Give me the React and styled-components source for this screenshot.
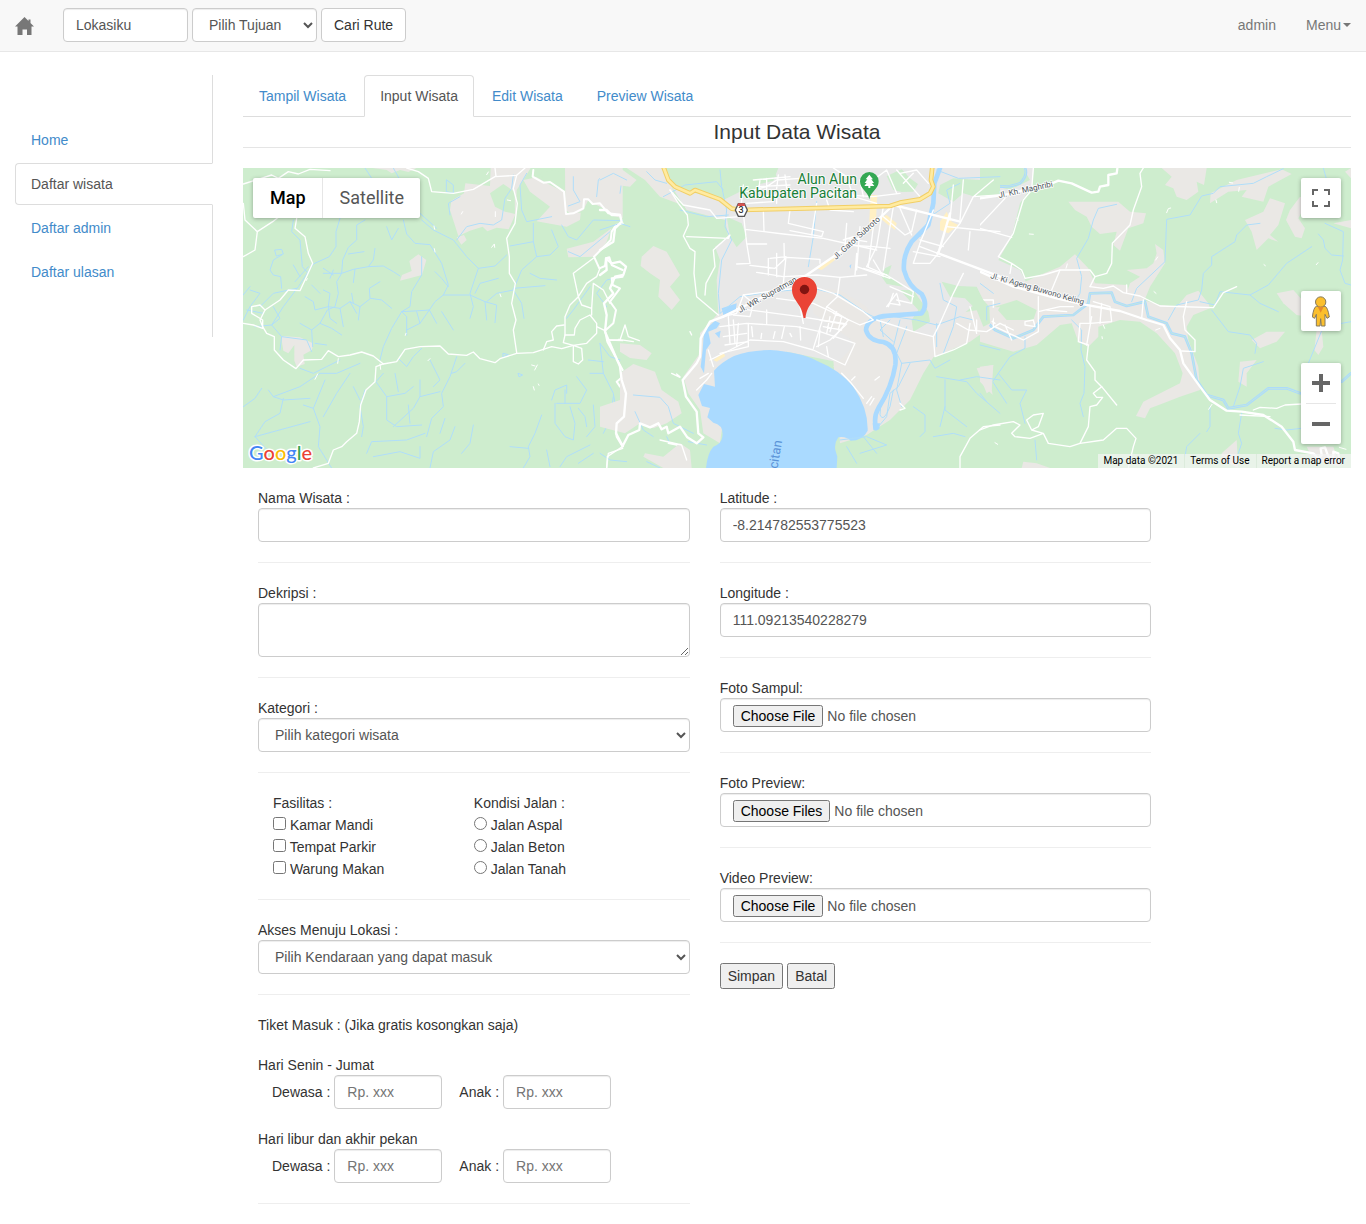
import React, { useState } from "react";
import styled, { createGlobalStyle } from "styled-components";

const GlobalStyle = createGlobalStyle`
  *, *::before, *::after { box-sizing: border-box; }
  body {
    margin: 0;
    background: #fff;
    color: #333;
    font-family: "Liberation Sans", Arial, sans-serif;
    font-size: 14px;
    line-height: 20px;
  }
  input, select, textarea, button { font-family: inherit; font-size: inherit; line-height: inherit; }
  a { color: #428bca; text-decoration: none; }
`;

/* ---------- Navbar ---------- */

const Navbar = styled.header`
  display: flex;
  align-items: flex-start;
  justify-content: space-between;
  min-height: 52px;
  padding: 0 15px;
  background: #f8f8f8;
  border-bottom: 1px solid #e7e7e7;
`;

const NavGroup = styled.div`
  display: flex;
  align-items: flex-start;
  gap: ${(p) => p.$gap}px;
`;

const NavLink = styled.a`
  display: flex;
  align-items: center;
  gap: 2px;
  padding: 15px 0;
  color: #777;
`;

const BrandLink = styled.a`
  display: flex;
  padding: 17px 0 16px;
`;

const RouteForm = styled.form`
  display: flex;
  gap: 4px;
  padding: 8px 0;
`;

const Caret = styled.span`
  border-top: 4px solid #777;
  border-left: 4px solid transparent;
  border-right: 4px solid transparent;
`;

/* ---------- Form controls ---------- */

const controlStyle = `
  display: block;
  height: 34px;
  padding: 6px 12px;
  color: #555;
  background: #fff;
  border: 1px solid #ccc;
  border-radius: 4px;
  box-shadow: inset 0 1px 1px rgba(0, 0, 0, 0.075);
`;

const TextInput = styled.input`
  ${controlStyle}
  width: ${(p) => p.$width || "100%"};
  &::placeholder { color: #757575; }
`;

const Select = styled.select`
  ${controlStyle}
  width: ${(p) => p.$width || "100%"};
`;

const TextArea = styled.textarea`
  ${controlStyle}
  width: 100%;
  height: 54px;
  resize: vertical;
`;

const SearchButton = styled.button`
  height: 34px;
  padding: 6px 12px;
  color: #333;
  background: #fff;
  border: 1px solid #ccc;
  border-radius: 4px;
`;

/* ---------- Page layout ---------- */

const Page = styled.div`
  display: grid;
  grid-template-columns: 198px minmax(0, 1fr);
  gap: 30px;
  align-items: start;
  padding: 23px 15px 0;
`;

const SideNav = styled.nav`
  display: flex;
  flex-direction: column;
  gap: 2px;
  padding: 44px 0;
  border-right: 1px solid #ddd;
`;

const SideLink = styled.a`
  margin-right: -1px;
  padding: 10px 15px;
  border: 1px solid transparent;
  border-radius: 4px 0 0 4px;
  ${(p) => p.$active && `
    color: #555;
    background: #fff;
    border-color: #ddd #fff #ddd #ddd;
  `}
`;

const Tabs = styled.nav`
  display: flex;
  gap: 2px;
  border-bottom: 1px solid #ddd;
`;

const Tab = styled.a`
  margin-bottom: -1px;
  padding: 10px 15px;
  border: 1px solid transparent;
  border-radius: 4px 4px 0 0;
  ${(p) => p.$active && `
    color: #555;
    background: #fff;
    border-color: #ddd #ddd #fff;
  `}
`;

const Title = styled.h1`
  margin: 0 0 20px;
  border-bottom: 1px solid #e5e5e5;
  font-size: 21px;
  line-height: 30px;
  font-weight: 400;
  text-align: center;
`;

const FormGrid = styled.form`
  display: grid;
  grid-template-columns: 5fr 5fr 2fr;
  padding-top: 20px;
`;

const Column = styled.div`
  min-width: 0;
  padding: 0 15px;
`;

const Divider = styled.hr`
  margin: 20px 0;
  border: 0;
  border-top: 1px solid #eee;
`;

const FieldLabel = styled.label`
  display: block;
`;

const OptionGroups = styled.div`
  display: grid;
  grid-template-columns: 1fr 1fr;
  padding: 0 15px;
`;

const OptionGroup = styled.fieldset`
  margin: 0;
  padding: 0;
  border: 0;
  min-width: 0;
  legend { padding: 0; }
`;

const Option = styled.label`
  display: block;
  input { margin: 4px 0 0; }
`;

const TicketHeading = styled.p`
  margin: 0 0 20px;
`;

const TicketGroup = styled.fieldset`
  margin: 0 0 20px;
  padding: 0;
  border: 0;
  legend { padding: 0; }
`;

const TicketRow = styled.div`
  display: flex;
  align-items: center;
  gap: 4px;
  padding-left: 14px;
`;

const TicketLabel = styled.label`
  input + & { margin-left: 13px; }
`;

const Actions = styled.div`
  display: flex;
  gap: 4px;
`;

const ActionButton = styled.button`
  color: #333;
`;

/* ---------- Map ---------- */

const MapFrame = styled.section`
  position: relative;
  height: 300px;
  overflow: hidden;
  background: #ceedce;
  font-family: Roboto, sans-serif;
`;

const MapCanvas = styled.svg`
  display: block;
  width: 100%;
  height: 100%;
`;

const MapOverlay = styled.div`
  position: absolute;
  display: flex;
  flex-direction: ${(p) => (p.$column ? "column" : "row")};
  top: ${(p) => p.$top};
  right: ${(p) => p.$right};
  bottom: ${(p) => p.$bottom};
  left: ${(p) => p.$left};
`;

const ControlBox = styled(MapOverlay)`
  background: #fff;
  border-radius: 2px;
  box-shadow: 0 1px 4px rgba(0, 0, 0, 0.3);
`;

const MapTypeButton = styled.button`
  height: 40px;
  padding: 0 16px 0 17px;
  border: 0;
  background: none;
  font-size: 18px;
  font-weight: ${(p) => (p.$active ? 500 : 400)};
  color: ${(p) => (p.$active ? "#000" : "#565656")};
  & + & { border-left: 1px solid #e6e6e6; }
`;

const MapIconButton = styled.button`
  display: flex;
  align-items: center;
  justify-content: center;
  width: 40px;
  height: 40px;
  padding: 0;
  border: 0;
  background: none;
`;

const ZoomRule = styled.span`
  height: 1px;
  margin: 0 5px;
  background: #e6e6e6;
`;

const Credit = styled.span`
  padding: 0 6px 0 5px;
  font-size: 10px;
  line-height: 14px;
  color: #000;
  background: rgba(245, 245, 245, 0.7);
  a { color: inherit; }
  & + & { border-left: 1px solid #dcebdc; }
`;

const Lines = ({ list, stroke, width, ...rest }) => (
  <g fill="none" stroke={stroke} strokeWidth={width} strokeLinejoin="round" strokeLinecap="round" {...rest}>
    {list.map((d) => <path key={d} d={d} />)}
  </g>
);

const LAND = "#eae8e5";
const CITY = "#e8e8e8";
const GREEN = "#ceedce";
const WATER = "#aadaff";
const STREAM = "#b0defa";

const highway = [
  "M190,20 L205,60 L225,80 L270,100 L285,90 L360,118 L395,146 L425,150 L620,145 L870,138 L900,128 L960,118 L990,100 L1000,80 L993,60 L997,20",
];

const west = {
  land: [
    "M752,24 L872,24 L846,66 L830,90 L828,160 L806,208 L770,203 L742,214 L728,200 L690,212 L655,228 L630,150 L634,122 L672,100 L676,70 L750,78Z",
    "M975,24 L1148,24 L1148,175 L1112,166 L1090,145 L1044,122 L1030,150 L1000,166 L976,150Z",
    "M850,60 L890,52 L925,72 L972,96 L978,160 L1022,158 L1020,180 L980,200 L890,184 L930,140 L870,95Z",
    "M1114,205 L1100,245 L1068,290 L985,292 L980,266 L1060,245Z",
    "M535,283 L559,300 L546,345 L480,362 L486,345 L515,333 L508,303Z",
    "M123,528 L180,532 L219,550 L216,570 L190,584 L194,612 L170,620 L163,602 L163,555 L145,580 L130,572Z",
    "M398,24 L530,24 L505,36 L480,30 L455,40 L440,30Z",
    "M650,232 L672,225 L680,240 L664,254Z",
  ],
  green: ["M750,100 L790,72 L824,95 L825,162 L795,155 L765,140Z", "M895,40 L950,30 L972,50 L970,85 L930,70Z"],
  streams: [
    "M300,175 L288,215 L288,260 L268,290 L220,312 L175,380 L130,440 L95,495 L45,500",
    "M160,180 L155,215 L180,240 L187,320 L200,335",
    "M105,270 L125,268 L130,282 L110,288 Z M125,285 L100,300 L90,330 L100,345 L122,350 L125,385",
    "M160,315 L180,350 M205,320 L165,365",
    "M375,180 L350,195 L350,240 L325,262 L308,300 L305,340 L290,365 L295,400 L285,440 L262,450 L240,490 L215,510 L218,560",
    "M325,282 L372,275 M405,265 L400,300 L385,320 L340,328 L305,340 L250,340 M345,328 L340,368",
    "M385,320 L430,318 L460,335 L480,348",
    "M545,290 L545,345 L515,395 L510,440 L485,455 L455,505 L430,560 L420,600",
    "M485,455 L500,470 L500,525 M530,455 L540,490 M455,445 L425,420 L392,415 L360,440 L330,425 L300,445 L265,440",
    "M390,415 L388,385 L420,365 M360,440 L355,480 M330,425 L350,460 M265,440 L225,450 L220,425 L195,410",
    "M335,400 L340,430 M300,445 L310,500 M265,440 L270,475 L290,490 M240,490 L275,505 L305,525 M215,510 L180,490",
    "M250,390 L270,400 L265,440 M215,375 L240,400 M280,330 L270,355 M250,325 L280,345",
    "M490,180 L500,222 L525,250 L570,254 L605,310 L625,375 L610,405 L585,425 L568,450 L540,452 L485,455",
    "M545,180 L580,210 L640,240 L680,290 L715,325 L705,355 L690,400 L700,440 L690,475",
    "M650,240 L680,200 L720,190 L760,195 L785,180 L795,115 L815,85 L820,45",
    "M715,325 L765,318 L800,285 M705,400 L720,370 L775,355 M610,405 L690,405 L735,425 L770,435 L765,488 M735,425 L740,480",
    "M585,335 L605,355 L625,380 M568,450 L590,490 M605,455 L640,510 M568,450 L540,490 L500,510",
    "M880,190 L880,245 L890,290 L845,330 L820,390 L770,400 L740,425 M820,390 L845,430 L852,475 M820,385 L915,377",
    "M880,245 L810,258 M890,290 L930,285 L955,260 L935,210 M870,340 L900,355 L950,360",
    "M965,195 L985,230 L1010,240 L1060,180 L1148,182 M985,275 L1020,290 L1110,215",
    "M1000,50 L1000,90 L1020,125 L985,138 M1110,24 L1075,60 L1070,110 M1148,40 L1140,100",
    "M860,40 L840,75 L845,150 L860,185 L935,170",
    "M440,200 L455,240 L475,205 M460,24 L480,60 L505,80 L500,110 L540,160 L590,205",
    "M375,24 L405,70 L410,120 M620,60 L640,75 L640,100 L620,95Z M630,165 L625,130 L660,110",
    "M10,480 L30,440 L60,400 L30,390 M20,450 L70,460 M5,410 L30,380 M60,440 L100,400 L170,385",
    "M100,440 L120,475 L95,495 L125,530 L200,540 L215,575 M125,530 L120,570 M225,550 L260,555",
    "M10,740 L45,715 L65,685 M180,625 L220,640 L260,620 L300,600 M100,710 L180,680 L240,640 L290,640 L360,610",
    "M85,690 L100,710 L130,720 L210,715 M130,715 L120,760 L75,785 L45,830 L100,890 M45,830 L210,785",
    "M255,660 L220,745 L240,800 L235,860 L275,924 M330,640 L290,700 L250,770 M340,680 L360,720 M220,745 L190,735",
    "M430,640 L408,665 L440,710 L440,780 L470,800 L545,795 M375,690 L360,740 L370,800 L365,830",
    "M440,710 L495,700 L520,680 M465,640 L475,695 M475,595 L500,620 L520,590 L545,565 M540,660 L540,710 L520,745 L460,800",
    "M650,590 L630,650 L605,700 L610,740 L575,775 L560,830 M675,610 L650,635 L635,640 M540,710 L600,695 M570,600 L600,660 L580,680",
    "M380,880 L395,845 L500,840 L555,820 M540,860 L540,895 L480,875 L400,890 M505,735 L510,790 M615,775 L600,820 M645,800 L630,840 L580,875 L570,924",
    "M700,795 L690,850 L665,880 M835,640 L848,645 L838,650Z M790,580 L805,584 L790,590Z",
    "M935,720 L945,690 L980,675 L980,700 M950,730 L1020,730 L1040,690 L1010,650 M975,730 L975,690 M945,730 L945,790 L975,830 L1000,840 L1005,790 L990,740",
    "M905,765 L885,820 L865,860 L870,890 L850,924 M810,860 L865,865 M1015,745 L1035,770 L1040,800 M1060,735 L1065,800 L1040,830 M1080,550 L1090,640 L1120,700 L1130,760",
    "M1045,600 L1090,605 M1050,640 L1090,640 M1120,710 L1110,780 L1090,820 M920,870 L930,920 M1050,855 L980,890 L960,920 M1060,880 L1015,910",
    "M1148,350 L1100,360 L1070,400 L1100,440 M1050,380 L1025,415 L1000,450 L980,475",
  ],
  roads: [
    "M10,72 L95,45 L115,55 L145,35 L175,42 L210,28 L270,32",
    "M10,130 L15,180 L52,215 L45,270 L10,290 M52,215 L98,185 L130,160",
    "M170,175 L165,205 L195,230 L205,280 L218,310 L195,360 L180,392 L145,390 L120,420 L75,450 L60,480 L68,500 L80,520 L103,530 L103,570 L130,600 L168,626 L190,600 L245,598 L265,572 L295,590 L330,585 L365,576 L400,588 L430,612 L470,605 L495,568 L540,560 L600,558 L625,582 L680,586 L700,576 L720,596 L765,608 L780,596 L830,580 L880,578 L935,560 L965,566 L1000,556",
    "M10,490 L40,495 L68,505 L68,480 L35,460 L35,440 L60,435 L75,450",
    "M500,24 L535,35 L565,55 L575,95 L640,100 L700,88 L765,50 L830,46 L855,24 M765,24 L768,50",
    "M830,46 L820,85 L832,130 L825,190 L800,235 L808,290 L808,340 L826,370 L815,430 L828,480 L820,510 L830,578",
    "M430,612 L408,620 L405,665 L378,690 L362,735 L358,785 L350,820 L320,845 L305,860 L280,870 L265,910 L220,924",
    "M1000,556 L1000,605 L1015,612 L1028,600 L1025,565 L1000,556 M1000,556 L1040,550 L1070,520 L1070,490 L1050,465 L1020,480 L1005,505 L1003,525 L975,525 L970,548 L1000,556",
    "M1070,500 L1095,512 M975,525 L975,470 L990,435 L1015,410 L1000,340 L1060,295 M1015,410 L1025,435 L1055,445 L1060,370 L1090,390 L1110,430 M1055,445 L1055,465 M1015,410 L1040,370 L1070,350 L1080,325",
    "M910,570 L920,545 L940,540 L935,515 L950,498 L972,495 M1100,540 L1148,542 M1100,924 L1105,880 L1148,865",
  ],
  major: [
    "M880,30 L878,50 L910,68 L930,66 L972,95 L978,162 L1000,160 L1030,145 L1032,118 L1045,118 L1058,132 L1080,130 L1105,160 L1140,164",
    "M1148,190 L1128,195 L1115,215 L1112,240 L1062,290 L1078,325 L1095,318 L1098,295 L1108,292 L1115,315 L1148,330",
    "M1148,350 L1115,355 L1118,375 L1140,385 L1110,425 L1128,450 L1120,490 L1095,512 L1102,545 L1148,630 M1148,650 L1130,665 L1140,680 M1148,765 L1125,790 L1130,830 L1148,860",
  ],
  ticks: ["M233,642 L225,658 M295,596 L293,610 M420,612 L422,628 M570,596 L564,602 M582,198 L584,208 M583,266 L585,276 M668,155 L664,162 M766,155 L766,170 M745,36 L740,44 M755,262 L763,252 L764,262 M802,120 L812,122 M498,520 L496,526 M780,402 L783,410 M892,615 L884,630 M875,615 L885,618 M880,680 L883,690 M895,672 L897,676 M198,362 L202,356"],
};

const center = {
  green: [
    "M860,48 L905,28 L930,55 L954,72 L940,95 L905,96 L880,90Z",
    "M1020,75 L1060,55 L1140,60 L1200,70 L1200,102 L1130,112 L1090,100 L1060,125 L1015,100Z",
    "M875,315 L865,345 L910,380 L860,372 L845,350 L855,325Z",
    "M1025,365 L1075,378 L1130,380 L1150,420 L1168,440 L1170,490 L1150,500 L1130,450 L1095,415 L1050,410Z",
    "M900,390 L940,390 L985,455 L990,485 L940,515 L935,480 L955,450Z",
    "M380,170 L425,190 L440,230 L410,262 L390,230Z",
    "M410,30 L520,30 L530,50 L480,70 L450,105 L380,75 L340,65Z",
  ],
  land: [
    "M0,24 L60,24 L110,60 L90,80 L45,74 L20,80 L0,70Z",
    "M125,290 L160,258 L200,275 L240,345 L210,380 L240,420 L215,450 L175,410 L180,360 L150,340 L122,318Z",
    "M60,550 L120,555 L155,580 L140,600 L90,594 L60,575Z",
    "M60,640 L100,612 L165,635 L185,690 L235,725 L245,760 L200,790 L160,805 L120,790 L75,820 L0,800 L0,740 L60,720Z",
    "M135,880 L190,890 L240,850 L270,870 L275,924 L190,924 L130,890Z",
    "M1130,625 L1180,615 L1175,690 L1160,700Z",
  ],
  streams: [
    "M0,60 L40,40 L80,60 M140,35 L165,60 L200,70 M0,210 L60,190 L90,200 M360,30 L365,80 L380,150 L375,200 L395,240 L365,300 L355,400 L360,460",
    "M190,110 L255,75 L350,65 L370,90 M240,150 L320,170 L385,165 M650,125 L640,230 L625,320",
    "M360,460 L420,410 L520,395 L640,385 L720,405 L800,460 L840,480",
    "M815,480 L880,470 L950,480 L1010,495 L1080,470 L1120,480",
    "M870,480 L840,510 L880,545 M900,480 L880,560 M920,500 L890,580 L905,610 L990,600 L1005,625 L1050,600",
    "M840,480 L850,530 M905,610 L890,690 L905,740 M930,610 L895,680 L870,700 L860,770 L835,800",
    "M870,690 Q840,715 840,765 Q850,790 870,740 L880,690",
    "M1010,30 L1075,55 L1200,50 M1080,70 L1040,90 L1050,130 L990,170 L960,230",
    "M0,550 L30,590 L60,600 M100,705 L180,712 L205,740 L220,790 L280,820 M105,755 L130,810 L160,830 M200,830 L210,850",
    "M0,880 L30,900 L80,905 M140,905 L180,924 M265,845 L320,855",
    "M940,740 L975,765 L975,815 L960,830 M1035,660 L1035,750 L1100,800 M1080,660 L1130,650 L1200,660 M1035,740 L1020,800 M1200,760 L1130,700 L1100,665 L1010,650",
    "M720,840 L800,830 L860,855 L780,880 M790,830 L830,880 M740,860 L770,910 M1000,830 L1060,820 L1095,830",
    "M1020,370 L1030,420 L1070,440 L1060,500 L1030,580 M1010,490 L1010,560 M1200,430 L1160,440 L1160,480",
  ],
  river: ["M1020,24 L1003,70 L1000,130 L985,195 L935,245 Q908,285 912,330 Q925,380 965,402 Q985,435 965,460 L850,468 Q800,478 798,510 Q806,542 850,546 Q892,558 886,615 Q876,680 835,745 Q820,770 828,805"],
  minor: [
    "M210,90 L235,130 L262,165 L265,195 L250,228 L270,265 L285,275 L282,340 L290,410 L355,465 M260,230 L385,235 L390,225 L340,270 L345,320 L318,370 L315,405",
    "M210,90 L250,135 L330,150 L350,175 L420,170 L430,75",
    "M430,160 L440,250 L450,310 L410,312 M435,208 L550,222 L670,235 L760,255 L830,270 M440,252 L500,252",
    "M490,150 L492,212 M570,150 L565,190 L670,215 L665,230 L570,212 M650,130 L635,225",
    "M450,316 L525,325 L560,292 L660,298 L660,310 M470,337 L550,350 L650,345 L720,352 L800,345 M505,295 L505,345 M530,280 L530,350 M510,295 L558,290 L550,370 M552,250 L553,295",
    "M720,352 L712,410 L680,440 L640,565 M770,280 L765,345 M780,200 L770,330 M820,200 L805,320 M740,190 L735,255 L820,260 L870,265",
    "M850,140 L830,260 L800,320 L860,345 L940,395 L935,430 L890,420 M880,140 L870,200 L850,330 M770,320 L870,355 M740,235 L800,245 M730,240 L760,230",
    "M370,470 L410,460 L430,405 L540,390 L640,380 L700,400 L790,455 L820,480 L780,495 L640,430 L530,415 M520,395 L510,410",
    "M410,445 L600,470 L740,492 L690,540 L650,560 M500,450 L500,492 M600,440 L610,490 M400,465 L450,470 L460,430 L430,405",
    "M385,470 L390,550 M400,480 L405,550 M415,490 L410,560 M360,500 L440,490 L590,500 L660,515 L765,550 L735,615 L640,570 L550,545 L450,540 L330,600",
    "M445,490 L445,560 L360,580 M370,530 L440,520 M375,555 L445,545 M325,570 L340,620 M300,655 L325,640 M290,690 L320,660 L335,640",
    "M455,500 L458,530 M485,520 L483,535 M525,515 L520,535 M553,500 L545,535 M600,500 L602,540 M660,510 L655,560 M680,560 L685,590 M570,520 L575,530",
    "M680,440 L745,480 L700,535 M700,460 L725,470 L715,510 M660,480 L730,492 M670,500 L725,510 M690,470 L680,520 M710,455 L690,515",
    "M725,640 L750,665 L790,715 M755,660 L765,650 M800,730 L815,710 M810,735 L822,715 M825,660 L838,650",
    "M440,95 L500,80 L530,60 L600,55 M460,60 L570,50 M470,80 L570,75 M480,60 L475,100 M500,55 L500,90 M535,45 L530,85 M555,45 L560,85 M455,110 L530,105 L530,130 M440,130 L520,125",
    "M700,24 L740,50 L760,110 L830,130 M780,60 L790,110 M820,60 L860,30 L890,100 M900,40 L950,30 L985,70 M660,100 L820,110 L900,100 M680,120 L690,150 L760,155",
    "M890,30 L960,110 M940,40 L910,70 M900,145 L935,225 M950,150 L935,215 L915,225 L850,170",
    "M1000,150 L960,250 L940,310 L990,310 L1015,280 M960,240 L1030,260 M960,260 L1040,290 M940,275 L1020,290",
    "M1120,110 L1080,190 L1010,280 M1060,75 L1050,180 M1090,60 L1080,180 M1040,200 L1140,210 L1200,215 M1110,215 L1105,270 M1180,60 L1120,110 L1200,105",
    "M870,380 L940,410 M860,440 L890,400 L900,435 L870,430 M880,400 L865,440 M850,350 L820,300 M790,325 L860,345",
    "M1000,530 L1005,590 L1060,570 L1100,550 L1110,490 M830,480 L940,515 L1000,530 L1020,490 L1060,400 L1090,340 M1070,490 L1105,510 L1160,515 L1200,490 M1130,480 L1130,510 M1110,440 L1130,520",
    "M20,540 L60,540 L75,495 L85,530 L118,542 M55,538 L100,545 M20,924 L22,890 L70,858 M1080,924 L1080,890 L1110,835 L1150,800 L1200,795",
    "M215,640 L240,652 M230,642 L240,650 M180,840 L245,855 L260,900 M205,850 L230,855 M270,515 L275,525 M900,730 L915,745 L900,750",
  ],
  major: [
    "M0,150 L20,150 L35,165 L60,165 L65,185 L45,205 L40,245 L0,270 M0,345 L20,330 L18,295 L35,310 L60,305 L78,320 L70,345 L45,350 L30,385 L40,400 L12,430 L20,465 L15,515 L60,620 L65,660 L78,700 L72,770 L50,790 L48,820 L68,858 L85,825 L118,810 L120,790 L150,802 L175,790 L185,808 L200,800 L205,820 L240,800 L262,832 L290,850 L310,832 L295,820 L290,755 L258,710 L248,660 L290,610 L300,590 L302,535 L330,485 L370,470",
    "M370,470 L470,420 L620,345 L700,290 L770,240 L880,135",
    "M880,135 L960,155 L1080,185 M1050,160 L1015,280 L1200,350",
  ],
};

const east = {
  city: ["M0,24 L162,24 L155,80 L120,130 L95,230 L55,300 L120,330 L140,370 L100,440 L0,440Z"],
  green: ["M0,24 L130,24 L150,60 L90,90 L0,65Z", "M45,440 L110,420 L150,440 L170,450 L160,480 L80,480Z"],
  land: [
    "M0,340 L135,365 L180,345 L240,320 L285,283 L325,325 L345,370 L440,375 L445,395 L490,420 L540,435 L590,440 L620,405 L655,392 L685,430 L690,445 L640,465 L620,500 L625,540 L655,620 L660,690 L600,710 L550,730 L510,745 L495,775 L468,768 L490,725 L600,670 L608,640 L585,580 L530,520 L480,485 L420,480 L355,500 L355,530 L325,560 L295,545 L275,490 L240,495 L170,555 L100,575 L0,545Z",
    "M265,125 L415,125 L450,155 L498,160 L490,190 L445,205 L420,272 L400,255 L410,215 L360,222 L335,200 L320,170 L285,150Z",
    "M545,24 L680,24 L672,75 L650,65 L655,95 L620,120 L590,110 L580,85 L555,75 L575,50Z",
    "M770,60 L905,28 L935,42 L865,80 L850,125 L785,110 L800,90 L745,95 L690,130 L692,100 L730,80Z",
    "M870,115 L915,130 L895,195 L870,225 L895,245 L865,235 L830,270 L815,215 L795,180 L850,155Z",
    "M930,150 L960,110 L985,120 L955,175 L975,205 L965,235 L945,230 L918,180Z",
    "M525,252 L550,270 L555,310 L510,380 L490,430 L440,400 L450,370 L480,350 L440,330 L500,325 L520,310 L530,280Z",
    "M890,400 L940,390 L985,440 L985,470 L950,465 L910,430Z",
    "M815,540 L860,515 L915,515 L890,545 L840,565Z",
    "M780,605 L830,600 L800,640 L800,680 L775,665Z",
    "M1010,510 L1025,510 L1030,560 L1015,585 L1003,570Z",
    "M725,880 L770,840 L775,924 L725,900Z",
    "M0,620 L40,615 L30,660 L38,705 L0,665Z",
    "M1095,35 L1113,24 L1113,55Z M1060,190 L1113,205 L1113,180Z M1000,900 L980,860 L1060,860 L1080,920Z M125,924 L130,905 L170,910 L210,924Z",
  ],
  streams: [
    "M410,133 L355,145 L340,180 L325,235 L290,295 L305,350 L300,400 L285,425",
    "M910,26 L860,50 L820,70 L720,80 L700,100 L665,108 L630,165 L560,178 L555,305 L470,385 L455,425",
    "M840,190 L800,195 L770,225 L765,245 L695,290 L695,315 L670,340 L665,390 L655,420 L590,435 L565,480",
    "M995,260 L920,310 L865,375 L810,405 L720,395 L705,435 L660,425 M810,405 L840,430 L895,455",
    "M1015,222 L1030,240 L1035,265 L1055,285 L1090,288 M1035,190 L1090,215 L1088,300 L1080,330 L1095,370 L1113,375 M1030,24 L1040,60",
    "M695,450 L745,515 L810,525 L830,550 L825,580 M850,605 L790,625 L780,680 L760,740 M1113,485 L1030,500 L985,610",
    "M135,530 L135,565 L90,590 L55,640 L38,665 L80,730 M55,640 L95,690 L140,690 L120,730 L135,790",
    "M275,480 L305,510 L303,570 L315,620 L312,700 L300,730 L310,770 M690,740 L690,800 L680,815 M660,820 L620,860 L615,890 M785,760 L775,820 L785,850 L775,880",
    "M885,805 L920,810 L965,805 M0,555 L60,570 M165,840 L170,900 M0,370 L40,400 M0,700 L20,725",
  ],
  rivers: [
    "M0,70 Q70,90 120,70 Q145,45 135,24",
    "M0,425 L20,440 L15,480 L45,510 L100,535 L160,510 L190,470 L280,465 L325,430 L330,400 L395,398 L405,425 L440,438 L495,425 L505,470 L560,490 L575,520 L615,530 L635,580 L650,660 L680,705 L730,720 L745,745 L800,735 L865,685 L920,685 L960,700 M1113,640 L1085,665",
  ],
  minor: [
    "M0,195 L75,115 M0,205 L95,232 M160,24 L155,90 L130,120 L100,220 L55,290 L95,310 L125,330 L135,355 M95,310 L90,340 M135,355 L190,345 L240,330 L330,330 L345,350 L330,380",
    "M240,330 L215,390 M345,350 L380,340 L395,310 L397,250 L450,195 L460,150 L485,80 L480,40 L490,24",
    "M330,380 L370,385 L400,378 L430,398 L480,408 L540,438 L700,443 L730,398 L770,380 M440,375 L440,400 M490,420 L485,475 M620,425 L610,470 L615,510 L645,540 L645,575 L605,573",
    "M330,440 L330,490 L300,490 L295,545 L325,555 L320,600 L345,635 L345,660 L365,680 L340,700 L350,712 L368,712 L350,735 L330,740 L325,800 L300,850 L270,860 L205,850 L190,820 L155,810 L140,780 L160,765 L190,760 L175,800 L155,810 M190,820 L150,835 L105,830 L95,820 L120,795 L100,785 L40,795 L0,810",
    "M365,680 L410,735 M300,850 L370,840 L410,805 L440,805 L468,835 L460,860 L445,924",
    "M330,490 L395,485 L390,440 L340,425 M365,430 L360,490 M320,555 L335,470",
    "M45,500 L130,540 L175,515 L175,410 M0,460 L45,490 M135,485 L160,480 L165,500 L135,495Z M175,455 L240,440 L280,440 M200,450 L260,455 M60,490 L100,510 M0,420 L40,420 L40,500 M75,495 L95,540",
    "M100,90 L115,95 M820,750 L840,742 L890,745 L915,735 L965,732 M780,765 L870,770",
  ],
  major: [
    "M0,115 L100,100 L160,80 L205,75 L235,62 L275,70 L335,98 L355,95 L360,80 L385,75 L385,45 L410,40 L412,26",
    "M0,335 L100,380 L230,415 L310,433 L420,453 L500,480 L550,495 L570,535 L600,570 L610,610 L660,680 L690,720 L740,752 L785,755 L850,765 L905,800 L940,845 L945,870 L1000,880 L1015,895 L1025,885 L1022,865 L1035,862 L1045,890 L1060,895 L1060,875 L1075,880 L1080,910",
  ],
  ticks: ["M560,158 L565,146 L572,144 M708,120 L710,128 M778,82 L776,94 M748,67 L758,69 M1014,308 L1009,314 M852,314 L856,317 M533,291 L527,300 M148,222 L160,223 M370,495 L374,505 M522,395 L528,400 M527,510 L540,505 M366,530 L367,536 M45,848 L53,853 M696,733 L686,748 M1078,862 L1098,868 M262,312 L258,325 M110,175 L115,180"],
};

const CityMap = () => (
  <MapCanvas viewBox="0 0 1108 300" preserveAspectRatio="xMidYMid slice" role="img" aria-label="Peta Pacitan">
    <rect width="1108" height="300" fill={GREEN} />
    <g transform="translate(-3 -8) scale(.33333)">
      {west.land.map((d) => <path key={d} d={d} fill={LAND} />)}
      {west.green.map((d) => <path key={d} d={d} fill={GREEN} />)}
      <Lines list={west.streams} stroke={STREAM} width={3} />
      <Lines list={west.roads} stroke="#fff" width={4} />
      <Lines list={west.major} stroke="#fff" width={6} />
      <Lines list={west.ticks} stroke="#fff" width={3} />
    </g>
    <g transform="translate(737 -8) scale(.33333)">
      {east.city.map((d) => <path key={d} d={d} fill={CITY} />)}
      {east.land.map((d) => <path key={d} d={d} fill={LAND} />)}
      {east.green.map((d) => <path key={d} d={d} fill={GREEN} />)}
      <Lines list={east.streams} stroke={STREAM} width={3} />
      <Lines list={east.rivers} stroke={WATER} width={8} />
      <Lines list={east.rivers} stroke={GREEN} width={2} />
      <Lines list={east.minor} stroke="#fff" width={4} />
      <Lines list={east.major} stroke="#fff" width={7} />
      <Lines list={east.ticks} stroke="#fff" width={3} />
    </g>
    <g transform="translate(357 -8) scale(.33333)">
      {center.land.map((d) => <path key={d} d={d} fill={LAND} />)}
      <path fill={LAND} d="M80,24 L190,24 L215,80 L232,130 L180,110 L135,60Z M1200,440 L1160,510 L1110,545 L1000,592 L970,640 L930,720 L870,780 L800,825 L720,850 L700,600 L800,470 L1000,470Z M355,460 L300,520 L300,580 L250,650 L265,700 L300,750 L310,820 L360,850 L400,560Z" />
      <path fill={CITY} d="M215,80 L270,95 L370,120 L450,80 L520,62 L535,24 L1140,24 L1140,420 L1080,470 L1000,530 L840,490 L800,470 L640,385 L760,550 L730,610 L560,575 L340,620 L320,570 L355,470 L350,360 L360,300 L345,260 L385,230 L375,180 L260,150Z" />
      <path fill={LAND} d="M640,385 L720,390 L800,440 L850,550 L880,570 L880,640 L820,770 L800,800 L750,660 L700,620 L770,550 L640,460Z" />
      {center.green.map((d) => <path key={d} d={d} fill={GREEN} />)}
      <path fill={WATER} d="M342,632 Q365,606 402,588 Q450,570 510,570 Q600,576 650,602 Q720,630 760,680 Q805,745 803,812 Q788,842 752,842 Q738,828 715,832 Q702,850 706,870 L712,890 L710,924 L318,924 Q322,880 340,860 Q365,850 367,830 Q372,795 340,788 L322,772 L330,744 L306,738 L295,705 L312,672 L345,680Z" />
      <path fill={WATER} d="M312,512 L345,482 L360,490 L350,505 L325,515 L332,550 L318,570 L312,640 L302,620 L308,570Z M365,445 L410,430 L408,448 L370,465Z M345,520 L362,512 L358,535Z M818,790 L840,790 L838,808 L820,810Z M748,318 L754,312 L752,326Z" />
      <Lines list={center.streams} stroke={STREAM} width={3} />
      <Lines list={center.river} stroke={WATER} width={14} />
      <path fill="#fff0c4" d="M812,105 L832,105 L828,180 L812,215 L808,180Z M840,175 L860,165 L890,190 L885,210 L865,195Z M1020,185 L1040,155 L1055,185 L1075,195 L1045,220 L1020,210Z M340,600 L370,578 L376,588 L350,605Z M650,325 L700,290 L705,300 L665,330Z" />
      <Lines list={center.minor} stroke="#fff" width={4} />
      <Lines list={center.major} stroke="#fff" width={7} />
      <Lines list={highway} stroke="#f2cf66" width={14} />
      <Lines list={highway} stroke="#ffeba1" width={8} />
      <path d="M406,150 L415,131 H433 L442,150 L433,169 H415Z" fill="#fff" stroke="#555" strokeWidth="4" />
      <path d="M415,130 H433 L436,138 H412Z" fill="#d9534f" />
      <path d="M808,118 C804,94 780,88 780,64 A28,28 0 0 1 836,64 C836,88 812,94 808,118Z" fill="#34a853" />
      <path d="M808,44 L819,58 H814 L822,69 H816 L823,78 H811 V84 H805 V78 H793 L800,69 H794 L802,58 H797Z" fill="#fff" />
    </g>
    <g fontFamily="Roboto, sans-serif" stroke="#fff" strokeWidth="2" strokeLinejoin="round" paintOrder="stroke" strokeOpacity=".8">
      <g fontSize="14" fill="#188038" textAnchor="end">
        <text x="614" y="16">Alun Alun</text>
        <text x="614" y="30">Kabupaten Pacitan</text>
      </g>
      <g fontSize="8" fill="#4f585e">
        <text transform="translate(497 145) rotate(-29)">Jl. WR. Supratman</text>
        <text transform="translate(593 92) rotate(-42)">Jl. Gatot Subroto</text>
        <text transform="translate(756 30) rotate(-12)">Jl. Kh. Maghribi</text>
        <text transform="translate(747 110) rotate(16)">Jl. Ki Ageng Buwono Keling</text>
      </g>
      <text x="498" y="45" fontSize="9" fontWeight="500" fill="#333" textAnchor="middle" stroke="none">3</text>
      <text transform="translate(539 273) rotate(-81)" fontSize="13" fill="#5a93d8" textAnchor="end" stroke="none">Pacitan</text>
    </g>
    <path d="M561.500 109C554 109 549 115 549 121.500C549 133 559 135 560.500 150H562.500C564 135 574 133 574 121.500C574 115 569 109 561.500 109Z" fill="#ea4335" />
    <circle cx="561.500" cy="121.500" r="4.700" fill="#811411" />
  </MapCanvas>
);

const HomeIcon = () => (
  <svg width="19" height="18" viewBox="0 0 19 18" aria-hidden="true">
    <path d="M9.500 0L13.500 4V2.500H15.500V6L19 9.500H16.500V18H12V12.500H7.500V18H2.500V9.500H0Z" fill="#777" />
  </svg>
);

const FullscreenIcon = () => (
  <svg width="18" height="18" viewBox="0 0 18 18" fill="none" stroke="#666" strokeWidth="2" aria-hidden="true">
    <path d="M1 6V1H6M12 1H17V6M17 12V17H12M6 17H1V12" />
  </svg>
);

const PegmanIcon = () => (
  <svg width="18" height="31" viewBox="995 407 54 93" aria-hidden="true">
    <g fill="#fbbf2d" stroke="#857a60" strokeWidth="3" strokeLinejoin="round">
      <path d="M1008,438 L1034,438 Q1042,440 1047,470 L1040,474 L1034,462 L1034,497 H1023 L1021,475 L1019,497 H1008 V462 L1003,474 L996,470 Q1000,440 1008,438Z" />
      <circle cx="1021" cy="425" r="15.500" />
    </g>
    <path d="M1012,439 H1030 L1021,457Z" fill="#e58a2c" />
  </svg>
);

const PlusMinusIcon = ({ plus }) => (
  <svg width="18" height="18" viewBox="0 0 18 18" fill="none" stroke="#666" strokeWidth="4" aria-hidden="true">
    <path d={plus ? "M0 9H18M9 0V18" : "M0 9H18"} />
  </svg>
);

const GoogleLogo = () => (
  <svg width="72" height="36" viewBox="0 0 72 36" role="img" aria-label="Google">
    <text x="1" y="28" fontFamily="Lato, sans-serif" fontSize="20" fontWeight="500" stroke="#fff" strokeWidth="3" strokeLinejoin="round" paintOrder="stroke">
      <tspan fill="#4285f4">G</tspan>
      <tspan fill="#ea4335">o</tspan>
      <tspan fill="#fbbc04">o</tspan>
      <tspan fill="#4285f4">g</tspan>
      <tspan fill="#34a853">l</tspan>
      <tspan fill="#ea4335">e</tspan>
    </text>
  </svg>
);

/* ---------- Composite parts ---------- */

const Field = ({ id, label, children }) => (
  <>
    <FieldLabel htmlFor={id}>{label}</FieldLabel>
    {children}
    <Divider />
  </>
);

const Ticket = ({ id, title }) => (
  <TicketGroup>
    <legend>{title}</legend>
    <TicketRow>
      <TicketLabel htmlFor={`${id}-dewasa`}>Dewasa :</TicketLabel>
      <TextInput id={`${id}-dewasa`} $width="108px" placeholder="Rp. xxx" />
      <TicketLabel htmlFor={`${id}-anak`}>Anak :</TicketLabel>
      <TextInput id={`${id}-anak`} $width="108px" placeholder="Rp. xxx" />
    </TicketRow>
  </TicketGroup>
);

const sideLinks = ["Home", "Daftar wisata", "Daftar admin", "Daftar ulasan"];
const tabs = ["Tampil Wisata", "Input Wisata", "Edit Wisata", "Preview Wisata"];
const facilities = ["Kamar Mandi", "Tempat Parkir", "Warung Makan"];
const roadTypes = ["Jalan Aspal", "Jalan Beton", "Jalan Tanah"];

export default function App() {
  const [mapType, setMapType] = useState("Map");

  return (
    <>
      <GlobalStyle />
      <Navbar>
        <NavGroup $gap={29}>
          <BrandLink href="#" aria-label="Beranda"><HomeIcon /></BrandLink>
          <RouteForm onSubmit={(e) => e.preventDefault()}>
            <TextInput $width="125px" aria-label="Lokasi awal" defaultValue="Lokasiku" />
            <Select $width="125px" aria-label="Tujuan"><option>Pilih Tujuan</option></Select>
            <SearchButton type="submit">Cari Rute</SearchButton>
          </RouteForm>
        </NavGroup>
        <NavGroup $gap={30}>
          <NavLink href="#">admin</NavLink>
          <NavLink href="#">Menu<Caret /></NavLink>
        </NavGroup>
      </Navbar>

      <Page>
        <SideNav>
          {sideLinks.map((t) => <SideLink key={t} href="#" $active={t === "Daftar wisata"}>{t}</SideLink>)}
        </SideNav>

        <main>
          <Tabs>
            {tabs.map((t) => <Tab key={t} href="#" $active={t === "Input Wisata"}>{t}</Tab>)}
          </Tabs>
          <Title>Input Data Wisata</Title>

          <MapFrame>
            <CityMap />
            <ControlBox $top="10px" $left="10px">
              {["Map", "Satellite"].map((t) => (
                <MapTypeButton key={t} type="button" $active={mapType === t} onClick={() => setMapType(t)}>{t}</MapTypeButton>
              ))}
            </ControlBox>
            <ControlBox $top="10px" $right="10px">
              <MapIconButton type="button" aria-label="Layar penuh"><FullscreenIcon /></MapIconButton>
            </ControlBox>
            <ControlBox $top="123px" $right="10px">
              <MapIconButton type="button" aria-label="Street View"><PegmanIcon /></MapIconButton>
            </ControlBox>
            <ControlBox $column $bottom="24px" $right="10px">
              <MapIconButton type="button" aria-label="Perbesar"><PlusMinusIcon plus /></MapIconButton>
              <ZoomRule />
              <MapIconButton type="button" aria-label="Perkecil"><PlusMinusIcon /></MapIconButton>
            </ControlBox>
            <MapOverlay $bottom="0" $left="5px"><GoogleLogo /></MapOverlay>
            <MapOverlay $bottom="0" $right="0">
              <Credit>Map data ©2021</Credit>
              <Credit><a href="#">Terms of Use</a></Credit>
              <Credit><a href="#">Report a map error</a></Credit>
            </MapOverlay>
          </MapFrame>

          <FormGrid onSubmit={(e) => e.preventDefault()}>
            <Column>
              <Field id="nama" label="Nama Wisata :"><TextInput id="nama" /></Field>
              <Field id="deskripsi" label="Dekripsi :"><TextArea id="deskripsi" /></Field>
              <Field id="kategori" label="Kategori :">
                <Select id="kategori"><option>Pilih kategori wisata</option></Select>
              </Field>
              <OptionGroups>
                <OptionGroup>
                  <legend>Fasilitas :</legend>
                  {facilities.map((t) => <Option key={t}><input type="checkbox" name="fasilitas" /> {t}</Option>)}
                </OptionGroup>
                <OptionGroup>
                  <legend>Kondisi Jalan :</legend>
                  {roadTypes.map((t) => <Option key={t}><input type="radio" name="jalan" /> {t}</Option>)}
                </OptionGroup>
              </OptionGroups>
              <Divider />
              <Field id="akses" label="Akses Menuju Lokasi :">
                <Select id="akses"><option>Pilih Kendaraan yang dapat masuk</option></Select>
              </Field>
              <TicketHeading>Tiket Masuk : (Jika gratis kosongkan saja)</TicketHeading>
              <Ticket id="kerja" title="Hari Senin - Jumat" />
              <Ticket id="libur" title="Hari libur dan akhir pekan" />
              <Divider />
            </Column>

            <Column>
              <Field id="lat" label="Latitude :"><TextInput id="lat" defaultValue="-8.214782553775523" /></Field>
              <Field id="lng" label="Longitude :"><TextInput id="lng" defaultValue="111.09213540228279" /></Field>
              <Field id="sampul" label="Foto Sampul:"><TextInput id="sampul" type="file" /></Field>
              <Field id="foto" label="Foto Preview:"><TextInput id="foto" type="file" multiple /></Field>
              <Field id="video" label="Video Preview:"><TextInput id="video" type="file" /></Field>
              <Actions>
                <ActionButton type="submit">Simpan</ActionButton>
                <ActionButton type="reset">Batal</ActionButton>
              </Actions>
            </Column>
          </FormGrid>
        </main>
      </Page>
    </>
  );
}
